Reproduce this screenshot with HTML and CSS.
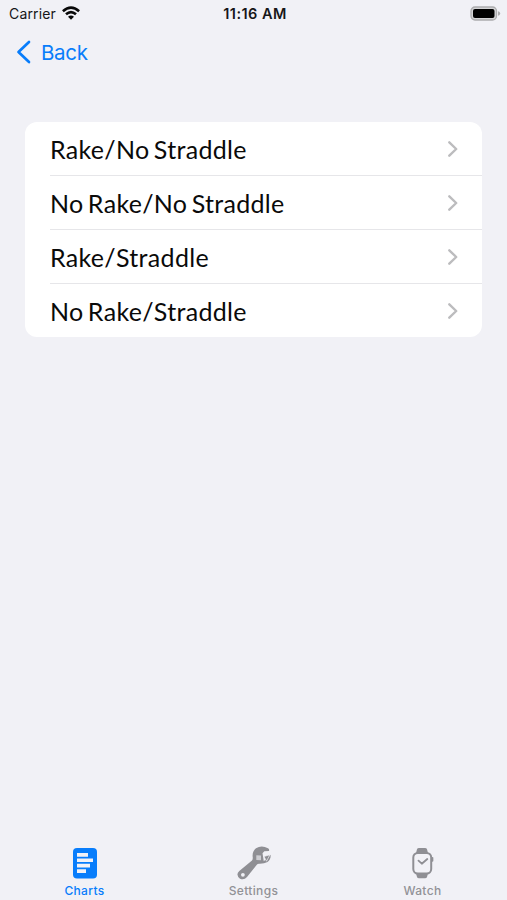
FILE: index.html
```html
<!DOCTYPE html>
<html lang="en">
<head>
<meta charset="utf-8">
<title>Charts</title>
<link rel="stylesheet" href="styles.css">
</head>
<body>
<div class="screen">
  <header class="status">
    <div class="carrier"><span>Carrier</span>
      <svg width="18" height="14" viewBox="0 0 18 14" fill="none" stroke="#090909" stroke-width="2.6"><path d="M.9 5.200Q9-2 17.100 5.200"/><path d="M4 8.300Q9 3.800 14 8.300"/><path d="M9 13.700 6 10.700Q9 8.300 12 10.700Z" fill="#090909" stroke="none"/></svg>
    </div>
    <time class="time">11:16 AM</time>
    <svg class="battery" width="31" height="15" viewBox="0 0 31 15"><rect x="1" y="1" width="25.5" height="13" rx="4" fill="#d4d4d6" stroke="#acacae" stroke-width="1.3"/><rect x="3" y="3" width="21.5" height="9" rx="2" fill="#000"/><path d="M28 5.200q2.200.6 2.200 2.300T28 9.800Z" fill="#acacae"/></svg>
  </header>
  <nav class="nav"><a class="back"><svg width="16" height="24" viewBox="0 0 16 24" fill="none" stroke="#087dfb" stroke-width="2.7" stroke-linecap="round" stroke-linejoin="round"><path d="M13 2 2.500 12 13 22"/></svg><span>Back</span></a></nav>
  <main class="list">
    <div class="row"><span class="label">Rake/No Straddle</span><svg class="chevron" viewBox="0 0 10 16"><path d="M1.300 1.300 8.200 8l-6.900 6.700"/></svg></div>
    <div class="row"><span class="label">No Rake/No Straddle</span><svg class="chevron" viewBox="0 0 10 16"><path d="M1.300 1.300 8.200 8l-6.900 6.700"/></svg></div>
    <div class="row"><span class="label">Rake/Straddle</span><svg class="chevron" viewBox="0 0 10 16"><path d="M1.300 1.300 8.200 8l-6.900 6.700"/></svg></div>
    <div class="row"><span class="label">No Rake/Straddle</span><svg class="chevron" viewBox="0 0 10 16"><path d="M1.300 1.300 8.200 8l-6.900 6.700"/></svg></div>
  </main>
  <footer class="tabs">
    <div class="tab active">
      <svg width="36" height="36" viewBox="0 0 36 36"><rect x="6" y="3" width="24" height="30.5" rx="4" fill="#087dfb"/><path d="M10 8h11v3.700H10zM10 13.400h16v3.700H10zM10 18.800h13v3.700H10zM10 24.200h9v3.700h-9z" fill="#f2f2f7"/></svg>
      <span>Charts</span>
    </div>
    <div class="tab">
      <svg width="36" height="36" viewBox="0 0 36 36"><path fill-rule="evenodd" d="M3.300 26 16 15.500Q17 14.500 16.700 12Q16 6.500 20 3.300Q25.500-.3 32 3.300Q33.600 4.300 33 6L28.300 6.300 26.500 8.200 27.800 16.200 34.600 9.800Q35 14.500 31.500 17Q28 19 23 18.800Q21.500 18.800 20.800 19.700L11 32Q8 35.500 4 33.700Q-.8 30 3.300 26ZM5 29.800a1.900 1.900 0 1 0 3.800 0a1.900 1.900 0 1 0-3.800 0Z" fill="#8f8f94"/><path d="m20.300 10.300 4.700.3v4.700l-4.700-.2Z" fill="#cdcdd2"/><path d="m28 11.500 6-1.800-3.500 6.500Z" fill="#8f8f94" stroke="#f1f1f6" stroke-width=".7"/></svg>
      <span>Settings</span>
    </div>
    <div class="tab">
      <svg width="36" height="36" viewBox="0 0 36 36"><path d="m11 8 1-3.700Q12.400 3 14 3h6q1.600 0 2 1.300l1 3.700ZM11 28.500l1 3.500q.4 1.300 2 1.300h6q1.600 0 2-1.300l1-3.500Z" fill="#8f8f94"/><rect x="8.300" y="8" width="17.900" height="20.500" rx="4.500" fill="#f2f2f7" stroke="#8f8f94" stroke-width="2"/><path d="M27.500 12.800v3" stroke="#8f8f94" stroke-width="1.700" stroke-linecap="round"/><path d="m13.500 15.700 3.300 3 5.500-4.700" fill="none" stroke="#8f8f94" stroke-width="1.800" stroke-linecap="round" stroke-linejoin="round"/></svg>
      <span>Watch</span>
    </div>
  </footer>
</div>
</body>
</html>
```
FILE: styles.css
```css
* { box-sizing: border-box; }
body { margin: 0; background: #f1f1f6; font-family: Inter, "Liberation Sans", sans-serif; }
.screen { height: 900px; display: flex; flex-direction: column; overflow: hidden; }
svg { display: block; flex: none; }
.status { height: 28px; display: grid; grid-template-columns: 1fr auto 1fr; align-items: center; padding: 0 6px 2px 9px; color: #161618; font-size: 14px; }
.carrier { display: flex; align-items: center; gap: 6px; letter-spacing: .15px; }
.time { font-size: 14.5px; font-weight: 600; letter-spacing: .45px; }
.battery { justify-self: end; }
.nav { height: 94px; padding: 12px 16px; }
.back { display: flex; align-items: center; gap: 9px; height: 24px; color: #087dfb; font-size: 20.5px; letter-spacing: -.3px; }
.list { margin: 0 25px; height: 215px; background: #fff; border-radius: 12px; padding-left: 25px; display: grid; grid-template-rows: repeat(3, 54px) 53px; }
.row { display: flex; align-items: center; justify-content: space-between; padding-right: 24px; border-bottom: 1px solid #e6e6e9; }
.row:last-child { border-bottom: 0; }
.label { font-family: Lato, sans-serif; font-size: 25px; line-height: 30px; letter-spacing: .32px; word-spacing: -2.4px; color: #0a0a0a; padding-top: 1px; white-space: nowrap; }
.chevron { width: 10px; height: 16px; fill: none; stroke: #bcbcbe; stroke-width: 2.4; stroke-linecap: round; stroke-linejoin: round; }
.tabs { margin-top: auto; height: 55px; display: grid; grid-template-columns: repeat(3, 1fr); }
.tab { display: flex; flex-direction: column; align-items: center; color: #929297; font-size: 12px; font-weight: 500; line-height: 15px; letter-spacing: .35px; }
.tab span { margin-top: 2px; }
.active { color: #087dfb; }
```
